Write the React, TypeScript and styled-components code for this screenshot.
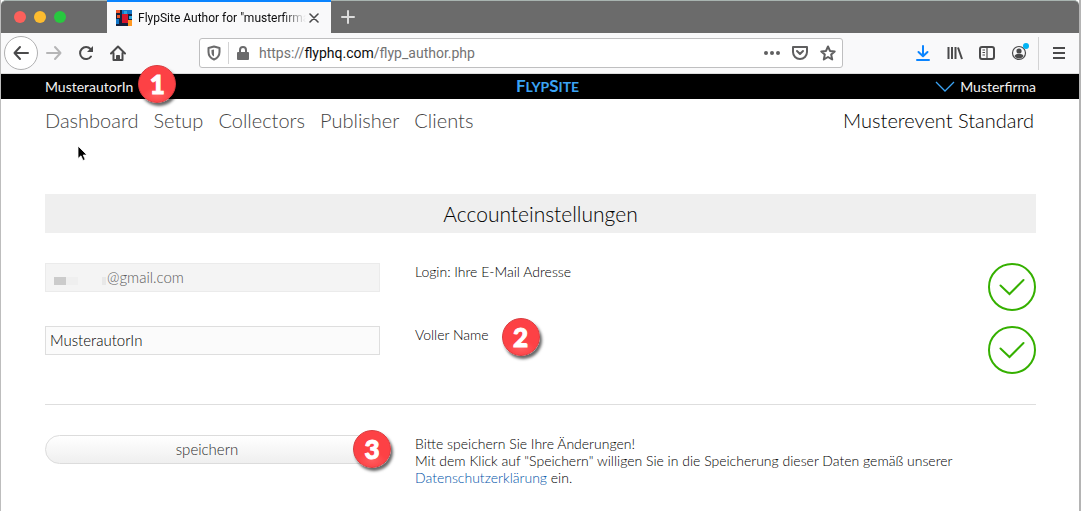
import React from "react";
import styled, { createGlobalStyle } from "styled-components";

const Global = createGlobalStyle`
  * { box-sizing: border-box; }
  body { margin: 0; background: #fff; font-family: Lato, "Liberation Sans", sans-serif; }
  button, input { font: inherit; color: inherit; margin: 0; padding: 0; border: 0; background: none; }
  a { text-decoration: none; color: inherit; }
  svg { display: block; flex: none; }
`;

const Window = styled.div`
  min-height: 100vh;
  border-left: 1px solid #bdbdbd;
  border-right: 2px solid #b4b4b4;
  background: #fff;
`;

const TabBar = styled.div`
  display: flex;
  height: 33px;
  background: #6b6b6b;
  border-top: 1px solid #a8b4b0;
  border-radius: 5px 5px 0 0;
  font-family: Roboto, "Liberation Sans", sans-serif;
`;

const Lights = styled.div`
  display: flex;
  align-items: center;
  gap: 8px;
  width: 106px;
  padding-left: 13px;
`;

const Light = styled.button<{ $color: string }>`
  width: 12px;
  height: 12px;
  border-radius: 50%;
  background: ${(p) => p.$color};
`;

const Tab = styled.div`
  display: flex;
  align-items: center;
  width: 224px;
  margin-top: -1px;
  padding: 0 9px;
  background: #f9f9fa;
  border-top: 2px solid #0a84ff;
`;

const TabTitle = styled.span`
  flex: 1;
  margin-left: 6px;
  overflow: hidden;
  white-space: nowrap;
  font-size: 12px;
  line-height: 16px;
  color: #0c0c0d;
  mask-image: linear-gradient(to left, transparent, #000 24px);
`;

const IconButton = styled.button<{ $w?: number; $color?: string }>`
  position: relative;
  display: flex;
  flex: none;
  align-items: center;
  justify-content: center;
  width: ${(p) => p.$w ?? 32}px;
  height: 32px;
  color: ${(p) => p.$color ?? "#4a4a4b"};
`;

const Toolbar = styled.div`
  display: flex;
  align-items: center;
  height: 41px;
  padding-left: 3px;
  background: #f9f9fa;
  border-bottom: 1px solid #dcdcdc;
`;

const BackButton = styled(IconButton)`
  width: 34px;
  height: 34px;
  border: 1px solid #b0b0b1;
  border-radius: 50%;
  background: #fff;
`;

const UrlBox = styled.div`
  display: flex;
  flex: 1;
  align-items: center;
  height: 30px;
  margin: 0 64px 0 65px;
  background: #fff;
  border: 1px solid #bfbfc0;
  border-radius: 3px;
  font: 14px/20px Roboto, "Liberation Sans", sans-serif;
`;

const Url = styled.span`
  flex: 1;
  margin-left: 2px;
  color: #737373;
  b { font-weight: 400; color: #0c0c0d; }
`;

const Divider = styled.i<{ $h: number }>`
  width: 1px;
  height: ${(p) => p.$h}px;
  background: #d3d3d4;
`;

const Tools = styled.div`
  display: flex;
  margin-right: 3px;
`;

const Dot = styled.i`
  position: absolute;
  top: 6px;
  right: 6px;
  width: 6px;
  height: 6px;
  border-radius: 50%;
  background: #00b3f4;
`;

const BlackBar = styled.header`
  display: grid;
  grid-template-columns: 1fr auto 1fr;
  align-items: center;
  height: 25px;
  padding: 0 43px 0 44px;
  background: #000;
  color: #f2f2f2;
  font-size: 14px;
  line-height: 18px;
`;

const Marked = styled.span`
  position: relative;
  justify-self: start;
`;

const Brand = styled.a`
  padding-left: 14px;
  color: #3ba4f5;
  font-size: 17px;
  line-height: 20px;
  font-weight: 700;
  small { font-size: 14px; }
`;

const Company = styled.button`
  display: flex;
  align-items: center;
  justify-self: end;
  gap: 5px;
`;

const Nav = styled.nav`
  position: relative;
  display: flex;
  align-items: center;
  gap: 15px;
  height: 42px;
  padding: 0 45px 0 44px;
  font-size: 20px;
  line-height: 24px;
  font-weight: 300;
  color: #444;
`;

const EventName = styled.span`
  margin-left: auto;
  color: #000;
`;

const Pointer = styled.svg`
  position: absolute;
  left: 76px;
  top: 46px;
`;

const Main = styled.main`
  padding: 53px 43px 24px 44px;
  color: #000;
  font-weight: 300;
`;

const Title = styled.h1`
  margin: 0 0 30px;
  background: #efefef;
  font-size: 21px;
  line-height: 39px;
  font-weight: 300;
  text-align: center;
`;

const Row = styled.div`
  display: grid;
  grid-template-columns: 335fr 538fr 48px;
  column-gap: 35px;
  align-items: start;
  font-size: 14px;
  line-height: 17px;
  & + & { margin-top: 15px; }
`;

const Field = styled.div<{ $off?: boolean }>`
  display: flex;
  align-items: center;
  height: 29px;
  padding: 0 4px;
  border: 1px solid ${(p) => (p.$off ? "#ebebeb" : "#dedede")};
  background: ${(p) => (p.$off ? "#f4f4f4" : "#fbfbfb")};
  color: ${(p) => (p.$off ? "#5c5c5c" : "#000")};
  font-size: 15px;
  input { flex: 1; min-width: 0; height: 26px; margin-bottom: 1px; outline: 0; opacity: 1; }
`;

const Mosaic = styled.svg`
  margin-top: 6px;
`;

const Label = styled.label`
  position: relative;
  justify-self: start;
`;

const Note = styled.p`
  grid-column: 2 / 4;
  margin: 0;
  a { color: #0053a8; }
`;

const Rule = styled.hr`
  height: 1px;
  margin: 30px 0;
  border: 0;
  background: #dedede;
`;

const SaveCell = styled.div`
  position: relative;
`;

const Save = styled.button`
  width: 100%;
  height: 29px;
  padding-right: 11px;
  border: 1px solid #dcdcdc;
  border-radius: 15px;
  background: linear-gradient(#fff, #efefef);
  font-size: 15px;
  color: #2c2c2c;
`;

const Badge = styled.span<{ $x: number; $y: number }>`
  position: absolute;
  left: ${(p) => `calc(100% + ${p.$x}px)`};
  top: ${(p) => p.$y}px;
  z-index: 1;
  width: 38px;
  height: 38px;
  border-radius: 50%;
  background: radial-gradient(ellipse 14px 8px at 50% 82%, #ff5c5e, #fd4145);
  border: 1px solid #d93a3d;
  box-shadow: 2px 3px 3px rgba(0, 0, 0, 0.6);
  color: #fff;
  font: 900 26px/36px Lato, sans-serif;
  -webkit-text-stroke: 1px #fff;
  text-align: center;
`;

const line = { fill: "none", stroke: "currentColor", strokeWidth: 2, strokeLinecap: "round", strokeLinejoin: "round" } as const;

const Check = () => (
  <svg width="48" height="48" fill="none" stroke="#35b000" strokeWidth="2" role="img" aria-label="ok">
    <circle cx="24" cy="24" r="23" />
    <path d="M12.500 22.500 21.500 31 35.500 17" strokeLinecap="round" />
  </svg>
);

export default function App() {
  return (
    <>
      <Global />
      <Window>
        <TabBar>
          <Lights>
            <Light $color="#fc605b" aria-label="Close" />
            <Light $color="#fdbc2f" aria-label="Minimize" />
            <Light $color="#28c83f" aria-label="Zoom" />
          </Lights>
          <Tab>
            <svg width="16" height="16" shapeRendering="crispEdges">
              <path fill="#14213d" d="M0 0h16v16H0z" />
              <path fill="#f0562b" d="M0 0h4v3H0zM1 5h3v3H1z" />
              <path fill="#1276c9" d="M6 0h10v4H6zM0 9h3v5H0z" />
              <path fill="#2da7df" d="M8 1h3v3H8zM13 6h3v3h-3z" />
              <path fill="#d5162d" d="M6 4h6v9H6z" />
              <path fill="#ff9822" d="M12 10h4v6h-4z" />
            </svg>
            <TabTitle>FlypSite Author for "musterfirma"</TabTitle>
            <IconButton $w={16} aria-label="Close tab">
              <svg width="10" height="10" {...line}><path d="m1 1 8 8M9 1 1 9" strokeWidth="1.600" /></svg>
            </IconButton>
          </Tab>
          <IconButton $w={34} $color="#dcdcdc" aria-label="New tab">
            <svg width="14" height="14" {...line}><path d="M7 1v12M1 7h12" /></svg>
          </IconButton>
        </TabBar>

        <Toolbar>
          <BackButton aria-label="Back">
            <svg width="16" height="16" {...line}><path d="M15 8H1.500M7 2 1.500 8 7 14" /></svg>
          </BackButton>
          <IconButton $color="#b5b5b6" aria-label="Forward">
            <svg width="16" height="16" {...line}><path d="M1 8h13.500M9 2l5.500 6L9 14" /></svg>
          </IconButton>
          <IconButton aria-label="Reload">
            <svg width="16" height="16" {...line}>
              <path d="M13 11.500A6 6 0 1 1 12.500 4" />
              <path d="M15 1v6H9z" fill="currentColor" stroke="none" />
            </svg>
          </IconButton>
          <IconButton aria-label="Home">
            <svg width="16" height="16" {...line}>
              <path d="M1 8.500 8 1.500l7 7M3.500 8v7h9V8" />
              <path d="M6.500 15v-4.500h3V15z" fill="currentColor" strokeWidth="1" />
            </svg>
          </IconButton>
          <UrlBox>
            <IconButton $w={28} $color="#6b6b6c" aria-label="Tracking protection">
              <svg width="14" height="16" {...line}>
                <path d="M7 1.500 12.500 3v4c0 3.500-2 6-5.500 7.500C3.500 13 1.500 10.500 1.500 7V3z" />
                <path d="M7 4.500v7C5 10.500 4.500 9 4.500 7V5z" fill="currentColor" stroke="none" />
              </svg>
            </IconButton>
            <Divider $h={22} />
            <IconButton $w={28} $color="#6b6b6c" aria-label="Connection secure">
              <svg width="12" height="14" {...line}>
                <path d="M3 7V4a3 3 0 0 1 6 0v3" />
                <rect y="6" width="12" height="8" rx="1" fill="currentColor" stroke="none" />
              </svg>
            </IconButton>
            <Url>https://<b>flyphq.com</b>/flyp_author.php</Url>
            <IconButton $w={28} $color="#5f5f60" aria-label="Page actions">
              <svg width="16" height="4" fill="currentColor"><circle cx="2" cy="2" r="2" /><circle cx="8" cy="2" r="2" /><circle cx="14" cy="2" r="2" /></svg>
            </IconButton>
            <IconButton $w={28} $color="#5f5f60" aria-label="Save to Pocket">
              <svg width="16" height="14" {...line}><path d="M1 1h14v5a7 7 0 0 1-14 0zM5 5l3 3 3-3" /></svg>
            </IconButton>
            <IconButton $w={28} $color="#5f5f60" aria-label="Bookmark">
              <svg width="16" height="16" {...line}><path d="m8 1.500 2 4.400 4.700.500-3.500 3.200 1 4.900L8 12l-4.200 2.500 1-4.900L1.300 6.400 6 5.900z" /></svg>
            </IconButton>
          </UrlBox>
          <Tools>
            <IconButton $color="#0a84ff" aria-label="Downloads">
              <svg width="14" height="16" {...line}><path d="M7 1v10M2.500 7 7 11.300 11.500 7M1 15h12" /></svg>
            </IconButton>
            <IconButton aria-label="Library">
              <svg width="16" height="14" {...line}><path d="M1.500 1v12M5 1v12M8.500 1v12M11 1.500 15 13" strokeLinecap="butt" /></svg>
            </IconButton>
            <IconButton aria-label="Sidebars">
              <svg width="16" height="14" {...line}>
                <rect x="1" y="1" width="14" height="12" rx="2" />
                <path d="M8 1v12M3.500 4h2.500M3.500 6.500h2.500M3.500 9h2.500" strokeWidth="1.200" strokeLinecap="butt" />
              </svg>
            </IconButton>
            <IconButton aria-label="Account">
              <svg width="16" height="16">
                <circle cx="8" cy="8" r="6.500" fill="none" stroke="currentColor" strokeWidth="1.200" />
                <circle cx="8" cy="6" r="2.600" fill="currentColor" />
                <path d="M3.500 11C4.500 9 6 9 8 9s3.500 0 4.500 2C11 13 9.500 13.500 8 13.500S5 13 3.500 11z" fill="currentColor" />
              </svg>
              <Dot />
            </IconButton>
          </Tools>
          <Divider $h={33} />
          <IconButton $w={40} aria-label="Menu">
            <svg width="12" height="12" {...line}><path d="M0 1h12M0 6h12M0 11h12" strokeLinecap="butt" /></svg>
          </IconButton>
        </Toolbar>

        <BlackBar>
          <Marked>MusterautorIn<Badge $x={5} $y={-13}>1</Badge></Marked>
          <Brand href="#">F<small>LYP</small>S<small>ITE</small></Brand>
          <Company>
            <svg width="20" height="11" fill="none" stroke="#3ba4f5" strokeWidth="1.300"><path d="m1 1 9 9 9-9" /></svg>
            Musterfirma
          </Company>
        </BlackBar>

        <Nav>
          <a href="#">Dashboard</a>
          <a href="#">Setup</a>
          <a href="#">Collectors</a>
          <a href="#">Publisher</a>
          <a href="#">Clients</a>
          <EventName>Musterevent Standard</EventName>
          <Pointer width="12" height="18">
            <path d="M1 1v12.500l3-2.700 2 4.700 2.200-1-2-4.500H10z" fill="#000" stroke="#fff" strokeWidth=".8" />
          </Pointer>
        </Nav>

        <Main>
          <Title>Accounteinstellungen</Title>
          <Row>
            <Field $off>
              <Mosaic width="57" height="8" shapeRendering="crispEdges">
                <path fill="#cbcbcb" d="M4 0h12v8H4z" />
                <path fill="#efefef" d="M16 0h12v8H16z" />
                <path fill="#e8e8e8" d="M52 0h4v8h-4z" />
              </Mosaic>
              <input id="mail" defaultValue="@gmail.com" disabled />
            </Field>
            <Label htmlFor="mail">Login: Ihre E-Mail Adresse</Label>
            <Check />
          </Row>
          <Row>
            <Field><input id="name" defaultValue="MusterautorIn" /></Field>
            <Label htmlFor="name">Voller Name<Badge $x={13} $y={-8}>2</Badge></Label>
            <Check />
          </Row>
          <Rule />
          <Row>
            <SaveCell>
              <Save>speichern</Save>
              <Badge $x={-27} $y={-5}>3</Badge>
            </SaveCell>
            <Note>
              Bitte speichern Sie Ihre Änderungen!<br />
              Mit dem Klick auf "Speichern" willigen Sie in die Speicherung dieser Daten gemäß unserer{" "}
              <br />
              <a href="#">Datenschutzerklärung</a> ein.
            </Note>
          </Row>
        </Main>
      </Window>
    </>
  );
}
